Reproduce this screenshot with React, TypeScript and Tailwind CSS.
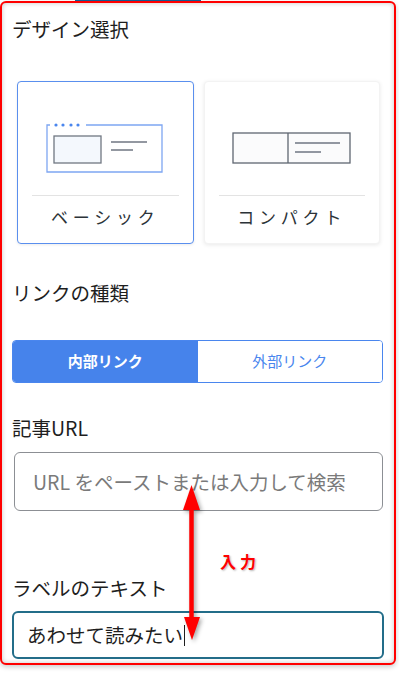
import React from 'react'

const jp = { fontFamily: '"Noto Sans CJK JP", "Noto Sans", sans-serif' }

function BasicIcon() {
  return (
    <svg width="118" height="51" viewBox="0 0 118 51" fill="none">
      <path d="M4 2 H1 V49 H116 V2 H40" stroke="#7ea6f2" strokeWidth="1.3" />
      <circle cx="10" cy="2" r="1.6" fill="#4a86ee" />
      <circle cx="17" cy="2" r="1.6" fill="#4a86ee" />
      <circle cx="25" cy="2" r="1.6" fill="#4a86ee" />
      <circle cx="32" cy="2" r="1.6" fill="#4a86ee" />
      <rect x="8" y="13" width="47" height="27" fill="#f4f8fd" stroke="#707782" strokeWidth="1.3" />
      <path d="M65 19 H101 M65 27 H87" stroke="#707782" strokeWidth="1.3" />
    </svg>
  )
}

function CompactIcon() {
  return (
    <svg width="120" height="33" viewBox="0 0 120 33" fill="none">
      <rect x="1" y="1" width="117" height="30" fill="#fbfbfc" stroke="#5f6671" strokeWidth="1.3" />
      <path d="M56 1 V31" stroke="#5f6671" strokeWidth="1.3" />
      <path d="M63 11 H108 M63 20 H89" stroke="#707782" strokeWidth="1.3" />
    </svg>
  )
}

function Card({ label, active, children }: { label: string; active?: boolean; children: React.ReactNode }) {
  return (
    <div
      className={
        'h-[163px] rounded-[4px] bg-white flex flex-col ' +
        (active
          ? 'border border-[#5a8fee] shadow-[0_1px_3px_rgba(0,0,0,0.08)]'
          : 'border border-[#f3f3f3] shadow-[0_1px_4px_rgba(0,0,0,0.09)]')
      }
    >
      <div className="h-[113px] pt-[20px] flex items-center justify-center">{children}</div>
      <div className="mx-[14px] h-px bg-[#e3e3e3]" />
      <div className="h-[42px] flex items-center justify-center text-[17px] tracking-[0.28em] text-[#2c3338]">
        {label}
      </div>
    </div>
  )
}

export default function App() {
  return (
    <div className="relative w-[399px] h-[685px] bg-white" style={jp}>
      <div className="ml-[75px] w-[126px] h-px bg-[#135e96]" />
      <div className="w-[396px] rounded-[6px] border-2 border-[#ff0000] bg-white pl-[10px] pr-[10px] pt-[12px] pb-[4px] shadow-[inset_0_0_5px_rgba(0,0,0,0.22),0_2px_5px_rgba(0,0,0,0.2)]">
        <div className="text-[19.5px] leading-[28px] text-[#1e1e1e]">デザイン選択</div>

        <div className="mt-[38px] ml-[5px] mr-[4px] grid grid-cols-2 gap-[10px]">
          <Card label="ベーシック" active>
            <BasicIcon />
          </Card>
          <Card label="コンパクト">
            <CompactIcon />
          </Card>
        </div>

        <div className="mt-[35px] text-[19.5px] leading-[28px] text-[#1e1e1e]">リンクの種類</div>

        <div className="mt-[33px] mr-[1px] h-[43px] grid grid-cols-2 rounded-[4px] border border-[#4a86ee] overflow-hidden text-[15px]">
          <div className="bg-[#4683eb] text-white font-bold flex items-center justify-center">内部リンク</div>
          <div className="bg-white text-[#4a86ee] flex items-center justify-center">外部リンク</div>
        </div>

        <div className="mt-[31px] text-[19.5px] leading-[28px] text-[#1e1e1e]">記事URL</div>

        <div className="mt-[10px] ml-[2px] mr-[1px] h-[59px] rounded-[6px] border border-[#8c8f94] pl-[18px] flex items-center text-[19.5px] text-[#7a7a7a]">
          URL をペーストまたは入力して検索
        </div>

        <div className="mt-[63px] text-[19.5px] leading-[28px] text-[#1e1e1e]">ラベルのテキスト</div>

        <div className="mt-[9px] h-[48px] rounded-[6px] border-2 border-[#236d89] pl-[13px] flex items-center text-[19.5px] text-[#1e1e1e]">
          あわせて読みたい
          <span className="inline-block w-px h-[21px] bg-[#1e1e1e] ml-[1px]" />
        </div>
      </div>

      {/* annotation */}
      <svg
        className="absolute left-[180px] top-[482px] drop-shadow-[2px_2px_2px_rgba(0,0,0,0.35)]"
        width="24"
        height="162"
        viewBox="0 0 24 162"
      >
        <path d="M11.5 3 L3 28 H20 Z" fill="#ff0000" />
        <path d="M11.5 25 V137" stroke="#ff0000" strokeWidth="4.5" />
        <path d="M12 158 L4 135 H20 Z" fill="#ff0000" />
      </svg>
      <div className="absolute left-[220px] top-[549px] text-[16px] leading-[24px] font-bold tracking-[0.25em] text-[#ff0000] [text-shadow:1px_1px_2px_rgba(0,0,0,0.3)]">
        入力
      </div>
    </div>
  )
}
